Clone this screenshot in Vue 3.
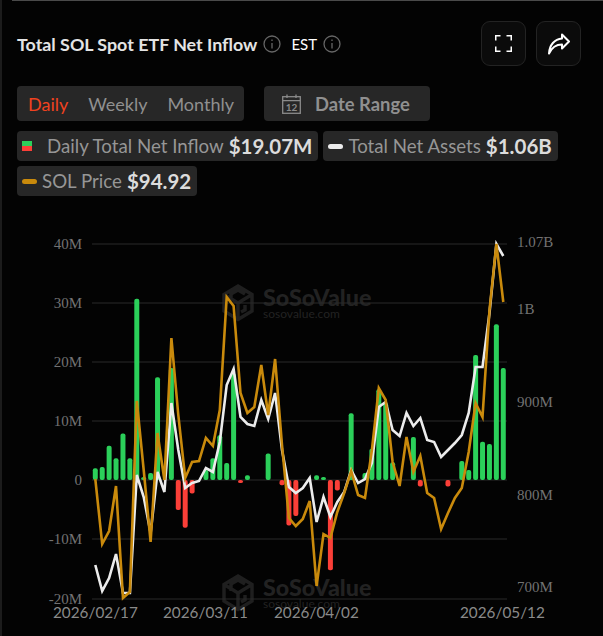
<template>
  <div class="panel">
    <div class="top-rule"></div>
    <div class="head">
      <div class="title-wrap">
        <span class="title">Total SOL Spot ETF Net Inflow</span>
        <svg class="info" viewBox="0 0 18 18">
          <circle cx="9" cy="9" r="8" />
          <path d="M9 8v5.500M9 4.500v1.600" />
        </svg>
        <span class="tz">EST</span>
        <svg class="info" viewBox="0 0 18 18">
          <circle cx="9" cy="9" r="8" />
          <path d="M9 8v5.500M9 4.500v1.600" />
        </svg>
      </div>
      <div class="head-btns">
        <button type="button" class="icon-btn">
          <svg width="17" height="17" viewBox="0 0 17 17" fill="none" stroke="#fff" stroke-width="1.500">
            <path d="M.75 5.500V.75H5.500M11.500 .75h4.750V5.500M16.250 11.500v4.750H11.500M5.500 16.250H.75V11.500" />
          </svg>
        </button>
        <button type="button" class="icon-btn">
          <svg width="22" height="22" viewBox="0 0 22 22" fill="none" stroke="#fff" stroke-width="2" stroke-linejoin="round">
            <path d="M14 1.500L21 8.500 14 15.500V11.500C8 11.500 4 14 1 20.500 1.500 12 6.500 6 14 5.500Z" />
          </svg>
        </button>
      </div>
    </div>

    <div class="controls">
      <div class="tabs">
        <span v-for="t in tabs" :key="t" class="tab" :class="{ active: t === 'Daily' }">{{ t }}</span>
      </div>
      <div class="date-range">
        <svg width="19" height="20" viewBox="0 0 19 20" fill="none" stroke="#8b8b8b" stroke-width="1.300">
          <rect x=".7" y="2.700" width="17.600" height="16.600" />
          <path d="M.7 6.700h17.600M5 .5v3.500M14 .5v3.500" />
          <text x="9.500" y="16.800" class="cal-num">12</text>
        </svg>
        <span>Date Range</span>
      </div>
    </div>

    <div class="legend">
      <div class="chip chip-inflow">
        <span class="split"><i></i><i></i></span>
        <span class="label">Daily Total Net Inflow</span>
        <b>$19.07M</b>
      </div>
      <div class="chip">
        <span class="dash white"></span>
        <span class="label">Total Net Assets</span>
        <b>$1.06B</b>
      </div>
      <div class="chip">
        <span class="dash gold"></span>
        <span class="label">SOL Price</span>
        <b>$94.92</b>
      </div>
    </div>

    <svg class="chart" viewBox="0 226 603 410" width="603" height="410">
      <g v-for="w in marks" :key="w.y" class="mark" :transform="`translate(0 ${w.y})`">
        <path class="mark-logo" d="M238 -17l14 8.500v16.500l-14 8.500-14 -8.500v-16.500zM224 -8.500l14 8.500 14 -8.500M238 0v16M231 -2v-7l7 -4 7 4M245 2v5l-4 2" />
        <text x="263" y="3" class="mark-big">SoSoValue</text>
        <text x="263" y="15" class="mark-small">sosovalue.com</text>
      </g>

      <line v-for="g in grid" :key="g.y" x1="92" x2="507" :y1="g.y" :y2="g.y" class="grid" />

      <text v-for="g in grid" :key="'l' + g.y" x="82" :y="g.y + 5" class="axis axis-left">{{ g.label }}</text>
      <text v-for="r in rightAxis" :key="r.label" x="517" :y="r.y" class="axis">{{ r.label }}</text>
      <text v-for="d in dates" :key="d.label" :x="d.x" y="618" class="date">{{ d.label }}</text>

      <rect
        v-for="b in bars"
        :key="b.x"
        :x="b.x - 2.500"
        :y="b.y"
        width="5"
        :height="b.h"
        rx="2"
        :fill="b.v > 0 ? '#2bd05a' : '#fb3f38'"
      />

      <polyline :points="whitePts" class="line" stroke="#ececec" />
      <polyline :points="goldPts" class="line" stroke="#c98a0c" />
    </svg>
  </div>
</template>

<script setup>
import { computed } from 'vue'

const tabs = ['Daily', 'Weekly', 'Monthly']

const grid = [
  { y: 244, label: '40M' },
  { y: 303, label: '30M' },
  { y: 362, label: '20M' },
  { y: 421, label: '10M' },
  { y: 480, label: '0' },
  { y: 539, label: '-10M' },
  { y: 599, label: '-20M' }
]

const rightAxis = [
  { y: 247, label: '1.07B' },
  { y: 314, label: '1B' },
  { y: 407, label: '900M' },
  { y: 500, label: '800M' },
  { y: 592, label: '700M' }
]

const dates = [
  { x: 53, label: '2026/02/17' },
  { x: 163, label: '2026/03/11' },
  { x: 274, label: '2026/04/02' },
  { x: 460, label: '2026/05/12' }
]

const marks = [{ y: 303 }, { y: 593 }]

const inflow = [
  2, 2.2, 5.8, 3.7, 7.9, 3.7, 30.7, 0.4, 1.2, 17.4,
  0, 19, -5.1, -8.1, -2.300, 0, 1.7, 3.7, 7.6, 2.9,
  18, -0.4, 0.8, 0, 0, 4.5, 0, -0.9, -7.7, -6.1,
  0, 0, 0.8, 0.2, -15.3, -1.8, 0, 11.3, 0, 1.2,
  5.3, 15.4, 13, 3, 0, 0, 7.3, -1.1, 0, 0,
  0, -1.1, 0, 3.2, 1.7, 21.2, 6.5, 6.1, 26.4, 19
]

const assetsY = [
  565, 591, 578, 554, 593, 593, 475, 497, 533, 472,
  492, 403, 450, 488, 483, 481, 468, 472, 442, 385,
  369, 417, 424, 426, 400, 419, 393, 450, 487, 493,
  488, 478, 522, 497, 517, 502, 492, 470, 483, 479,
  463, 407, 402, 430, 436, 413, 426, 418, 440, 442,
  457, 450, 443, 435, 413, 367, 367, 313, 244, 256
]

const priceY = [
  479, 544, 531, 486, 598, 592, 401, 470, 542, 433,
  480, 338, 415, 478, 462, 461, 438, 446, 410, 297,
  306, 393, 413, 407, 365, 415, 359, 445, 518, 526,
  519, 501, 586, 534, 538, 512, 493, 471, 495, 498,
  450, 388, 400, 462, 486, 437, 472, 456, 493, 498,
  529, 513, 498, 488, 452, 403, 417, 310, 244, 302
]

const xAt = (i) => 95.3 + i * 6.915
const toPoints = (ys) => ys.map((y, i) => `${xAt(i).toFixed(1)},${y}`).join(' ')

const whitePts = computed(() => toPoints(assetsY))
const goldPts = computed(() => toPoints(priceY))

const bars = computed(() =>
  inflow
    .map((v, i) => {
      const h = Math.max(Math.abs(v) * 5.9, 3)
      return { v, x: xAt(i), h, y: v > 0 ? 480 - h : 480 }
    })
    .filter((b) => b.v !== 0)
)
</script>

<style>
html,
body {
  background: #000;
}
</style>

<style scoped>
.panel {
  width: 603px;
  height: 636px;
  box-sizing: border-box;
  background: #030303;
  border-left: 2px solid #1c1c1c;
  font-family: Lato, "Noto Sans", sans-serif;
  overflow: hidden;
}

.top-rule {
  height: 1px;
  margin-left: 10px;
  background: #4a4a4a;
}

.head {
  display: flex;
  justify-content: space-between;
  align-items: center;
  margin-top: 20px;
  padding: 0 22px 0 15px;
}

.title-wrap {
  display: flex;
  align-items: center;
}

.title {
  font-size: 17.850px;
  font-weight: 700;
  color: #e4e4e4;
}

.tz {
  font-size: 15px;
  color: #fff;
  margin: 0 6px 0 10px;
}

.info {
  width: 18px;
  height: 18px;
  margin-left: 6px;
  fill: none;
  stroke: #666;
  stroke-width: 1.300;
}

.tz + .info {
  margin-left: 0;
}

.head-btns {
  display: flex;
  gap: 10px;
}

.icon-btn {
  width: 45px;
  height: 45px;
  display: flex;
  align-items: center;
  justify-content: center;
  padding: 0;
  background: #0b0b0b;
  border: 1px solid #232323;
  border-radius: 9px;
}

.controls {
  display: flex;
  gap: 20px;
  margin: 20px 0 0 15px;
}

.tabs,
.date-range {
  height: 35px;
  display: flex;
  align-items: center;
  background: #272727;
  border-radius: 4px;
  font-size: 18px;
  color: #909090;
}

.tabs {
  width: 227px;
  box-sizing: border-box;
  padding: 0 10px 0 11px;
  justify-content: space-between;
}

.tab.active {
  color: #f0421f;
}

.date-range {
  width: 166px;
  box-sizing: border-box;
  padding-left: 18px;
  gap: 14px;
  font-weight: 700;
  font-size: 18.400px;
}

.cal-num {
  font-size: 10px;
  font-weight: 700;
  fill: #8b8b8b;
  stroke: none;
  text-anchor: middle;
}

.legend {
  display: flex;
  flex-wrap: wrap;
  gap: 5px;
  margin: 10px 0 0 15px;
  width: 560px;
}

.chip {
  height: 30px;
  display: flex;
  align-items: center;
  gap: 5px;
  padding: 0 6px 0 5px;
  background: #272727;
  border-radius: 4px;
  font-size: 18.700px;
  white-space: nowrap;
}

.chip .label {
  color: #969696;
}

.chip b {
  font-size: 20.500px;
  font-weight: 700;
  color: #dcdcdc;
}

.chip-inflow .label {
  margin-left: 10px;
}

.split {
  width: 10px;
  height: 10px;
  display: flex;
  flex-direction: column;
  margin-top: -1px;
}

.split i {
  flex: 1;
  background: #2bd05a;
}

.split i + i {
  background: #fb3f38;
}

.dash {
  width: 15px;
  height: 5px;
  border-radius: 3px;
}

.dash.white {
  background: #ececec;
}

.dash.gold {
  background: #c98a0c;
}

.chart {
  display: block;
  margin: 30px 0 0 -2px;
}

.grid {
  stroke: #2b2b2b;
  stroke-width: 1;
}

.axis {
  font-family: "Liberation Serif", serif;
  font-size: 15px;
  fill: #727272;
}

.axis-left {
  text-anchor: end;
}

.date {
  font-family: Lato, sans-serif;
  font-size: 15.300px;
  fill: #8a8a8a;
}

.line {
  fill: none;
  stroke-width: 2.600;
  stroke-linejoin: miter;
}

.mark-logo {
  fill: none;
  stroke: #1f1f1f;
  stroke-width: 3.500;
}

.mark-big {
  font-family: Lato, sans-serif;
  font-size: 23.300px;
  font-weight: 900;
  fill: #222;
}

.mark-small {
  font-family: Lato, sans-serif;
  font-size: 12px;
  fill: #222;
}
</style>
